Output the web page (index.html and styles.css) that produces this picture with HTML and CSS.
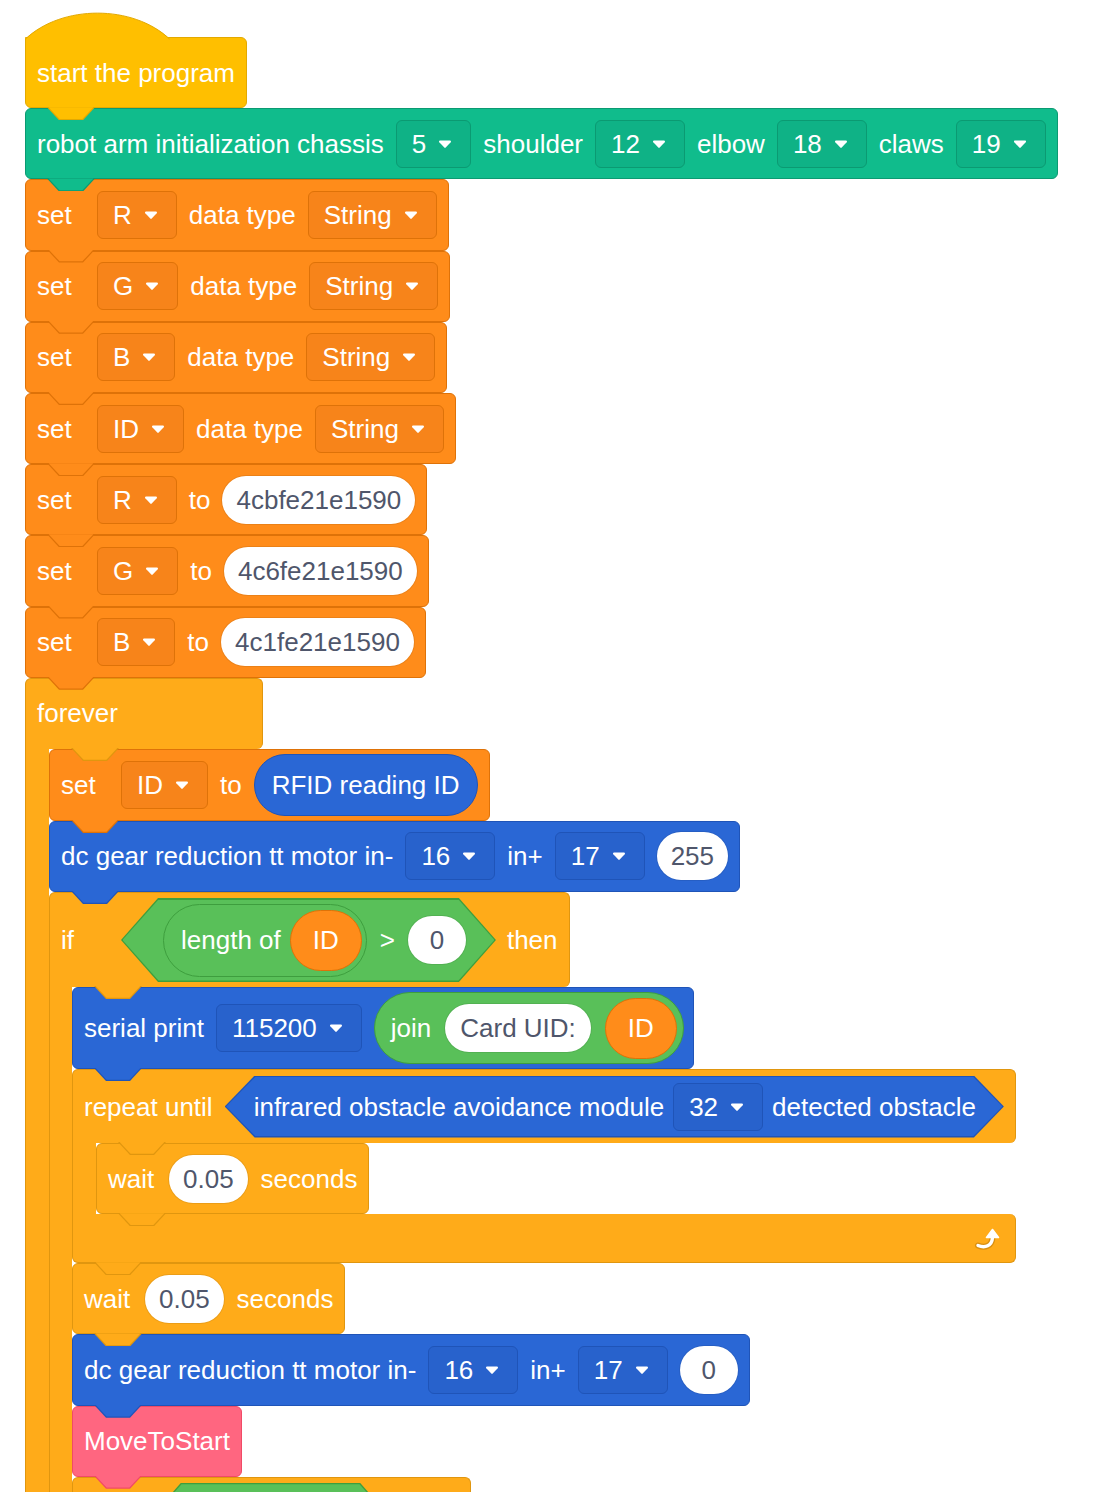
FILE: index.html
```html
<!DOCTYPE html>
<html>
<head>
<meta charset="utf-8">
<link rel="stylesheet" href="styles.css">
</head>
<body>
<div class="script">
  <div class="blk hat ev">
    <svg class="hump" viewBox="0 0 145 27"><path class="hf" d="M0,27 C37,-7.5 108,-7.5 145,27 Z"/><path class="hs" d="M0.5,27 C37,-7.5 108,-7.5 144.5,27"/></svg>
    <span class="lbl">start the program</span>
  </div>
  <div class="blk ext">
    <span class="lbl">robot arm initialization chassis</span>
    <span class="dd">5<svg class="arr" viewBox="0 0 14 10"><path d="M2 1.5h10c.9 0 1.3 1 .7 1.7L7.7 8.6c-.4.4-1 .4-1.4 0L1.3 3.2C.7 2.5 1.1 1.5 2 1.5z"/></svg></span>
    <span class="lbl">shoulder</span>
    <span class="dd">12<svg class="arr" viewBox="0 0 14 10"><path d="M2 1.5h10c.9 0 1.3 1 .7 1.7L7.7 8.6c-.4.4-1 .4-1.4 0L1.3 3.2C.7 2.5 1.1 1.5 2 1.5z"/></svg></span>
    <span class="lbl">elbow</span>
    <span class="dd">18<svg class="arr" viewBox="0 0 14 10"><path d="M2 1.5h10c.9 0 1.3 1 .7 1.7L7.7 8.6c-.4.4-1 .4-1.4 0L1.3 3.2C.7 2.5 1.1 1.5 2 1.5z"/></svg></span>
    <span class="lbl">claws</span>
    <span class="dd">19<svg class="arr" viewBox="0 0 14 10"><path d="M2 1.5h10c.9 0 1.3 1 .7 1.7L7.7 8.6c-.4.4-1 .4-1.4 0L1.3 3.2C.7 2.5 1.1 1.5 2 1.5z"/></svg></span>
  </div>
  <div class="blk var">
    <span class="lbl first">set</span>
    <span class="dd">R<svg class="arr" viewBox="0 0 14 10"><path d="M2 1.5h10c.9 0 1.3 1 .7 1.7L7.7 8.6c-.4.4-1 .4-1.4 0L1.3 3.2C.7 2.5 1.1 1.5 2 1.5z"/></svg></span>
    <span class="lbl">data type</span>
    <span class="dd">String<svg class="arr" viewBox="0 0 14 10"><path d="M2 1.5h10c.9 0 1.3 1 .7 1.7L7.7 8.6c-.4.4-1 .4-1.4 0L1.3 3.2C.7 2.5 1.1 1.5 2 1.5z"/></svg></span>
  </div>
  <div class="blk var">
    <span class="lbl first">set</span>
    <span class="dd">G<svg class="arr" viewBox="0 0 14 10"><path d="M2 1.5h10c.9 0 1.3 1 .7 1.7L7.7 8.6c-.4.4-1 .4-1.4 0L1.3 3.2C.7 2.5 1.1 1.5 2 1.5z"/></svg></span>
    <span class="lbl">data type</span>
    <span class="dd">String<svg class="arr" viewBox="0 0 14 10"><path d="M2 1.5h10c.9 0 1.3 1 .7 1.7L7.7 8.6c-.4.4-1 .4-1.4 0L1.3 3.2C.7 2.5 1.1 1.5 2 1.5z"/></svg></span>
  </div>
  <div class="blk var">
    <span class="lbl first">set</span>
    <span class="dd">B<svg class="arr" viewBox="0 0 14 10"><path d="M2 1.5h10c.9 0 1.3 1 .7 1.7L7.7 8.6c-.4.4-1 .4-1.4 0L1.3 3.2C.7 2.5 1.1 1.5 2 1.5z"/></svg></span>
    <span class="lbl">data type</span>
    <span class="dd">String<svg class="arr" viewBox="0 0 14 10"><path d="M2 1.5h10c.9 0 1.3 1 .7 1.7L7.7 8.6c-.4.4-1 .4-1.4 0L1.3 3.2C.7 2.5 1.1 1.5 2 1.5z"/></svg></span>
  </div>
  <div class="blk var">
    <span class="lbl first">set</span>
    <span class="dd">ID<svg class="arr" viewBox="0 0 14 10"><path d="M2 1.5h10c.9 0 1.3 1 .7 1.7L7.7 8.6c-.4.4-1 .4-1.4 0L1.3 3.2C.7 2.5 1.1 1.5 2 1.5z"/></svg></span>
    <span class="lbl">data type</span>
    <span class="dd">String<svg class="arr" viewBox="0 0 14 10"><path d="M2 1.5h10c.9 0 1.3 1 .7 1.7L7.7 8.6c-.4.4-1 .4-1.4 0L1.3 3.2C.7 2.5 1.1 1.5 2 1.5z"/></svg></span>
  </div>
  <div class="blk var">
    <span class="lbl first">set</span>
    <span class="dd">R<svg class="arr" viewBox="0 0 14 10"><path d="M2 1.5h10c.9 0 1.3 1 .7 1.7L7.7 8.6c-.4.4-1 .4-1.4 0L1.3 3.2C.7 2.5 1.1 1.5 2 1.5z"/></svg></span>
    <span class="lbl">to</span>
    <span class="num">4cbfe21e1590</span>
  </div>
  <div class="blk var">
    <span class="lbl first">set</span>
    <span class="dd">G<svg class="arr" viewBox="0 0 14 10"><path d="M2 1.5h10c.9 0 1.3 1 .7 1.7L7.7 8.6c-.4.4-1 .4-1.4 0L1.3 3.2C.7 2.5 1.1 1.5 2 1.5z"/></svg></span>
    <span class="lbl">to</span>
    <span class="num">4c6fe21e1590</span>
  </div>
  <div class="blk var">
    <span class="lbl first">set</span>
    <span class="dd">B<svg class="arr" viewBox="0 0 14 10"><path d="M2 1.5h10c.9 0 1.3 1 .7 1.7L7.7 8.6c-.4.4-1 .4-1.4 0L1.3 3.2C.7 2.5 1.1 1.5 2 1.5z"/></svg></span>
    <span class="lbl">to</span>
    <span class="num">4c1fe21e1590</span>
  </div>

  <div class="cblk ctl forever">
    <div class="blk chead"><span class="lbl">forever</span></div>
    <div class="cbody">
      <div class="carm"></div>
      <div class="stack">
        <div class="blk var">
          <span class="lbl first">set</span>
          <span class="dd">ID<svg class="arr" viewBox="0 0 14 10"><path d="M2 1.5h10c.9 0 1.3 1 .7 1.7L7.7 8.6c-.4.4-1 .4-1.4 0L1.3 3.2C.7 2.5 1.1 1.5 2 1.5z"/></svg></span>
          <span class="lbl">to</span>
          <span class="rep blu rfid">RFID reading ID</span>
        </div>
        <div class="blk blu">
          <span class="lbl">dc gear reduction tt motor in-</span>
          <span class="dd">16<svg class="arr" viewBox="0 0 14 10"><path d="M2 1.5h10c.9 0 1.3 1 .7 1.7L7.7 8.6c-.4.4-1 .4-1.4 0L1.3 3.2C.7 2.5 1.1 1.5 2 1.5z"/></svg></span>
          <span class="lbl">in+</span>
          <span class="dd">17<svg class="arr" viewBox="0 0 14 10"><path d="M2 1.5h10c.9 0 1.3 1 .7 1.7L7.7 8.6c-.4.4-1 .4-1.4 0L1.3 3.2C.7 2.5 1.1 1.5 2 1.5z"/></svg></span>
          <span class="num">255</span>
        </div>

        <div class="cblk ctl ifblk">
          <div class="blk chead tall">
            <span class="lbl first">if</span>
            <div class="hex op big">
              <div class="hexin">
                <span class="rep op len"><span class="lbl">length of</span><span class="vrep">ID</span></span>
                <span class="lbl">&gt;</span>
                <span class="num">0</span>
              </div>
            </div>
            <span class="lbl then">then</span>
          </div>
          <div class="cbody">
            <div class="carm"></div>
            <div class="stack">
              <div class="blk blu serial">
                <span class="lbl">serial print</span>
                <span class="dd">115200<svg class="arr" viewBox="0 0 14 10"><path d="M2 1.5h10c.9 0 1.3 1 .7 1.7L7.7 8.6c-.4.4-1 .4-1.4 0L1.3 3.2C.7 2.5 1.1 1.5 2 1.5z"/></svg></span>
                <span class="rep op join"><span class="lbl">join</span><span class="num">Card UID:</span><span class="vrep">ID</span></span>
              </div>

              <div class="cblk ctl repeat">
                <div class="blk chead rpt">
                  <span class="lbl">repeat until</span>
                  <div class="hex blu mid">
                    <div class="hexin">
                      <span class="lbl">infrared obstacle avoidance module</span>
                      <span class="dd">32<svg class="arr" viewBox="0 0 14 10"><path d="M2 1.5h10c.9 0 1.3 1 .7 1.7L7.7 8.6c-.4.4-1 .4-1.4 0L1.3 3.2C.7 2.5 1.1 1.5 2 1.5z"/></svg></span>
                      <span class="lbl">detected obstacle</span>
                    </div>
                  </div>
                </div>
                <div class="cbody">
                  <div class="carm"></div>
                  <div class="stack">
                    <div class="blk ctl wait">
                      <span class="lbl first">wait</span>
                      <span class="num">0.05</span>
                      <span class="lbl">seconds</span>
                    </div>
                  </div>
                </div>
                <div class="cfoot">
                  <svg class="loop" viewBox="0 0 28 26"><path d="M4 20.5 C11 23.5 18 21 18.5 12.5" fill="none" stroke="#D98F10" stroke-width="6" stroke-linecap="round"/><path d="M4 20.5 C11 23.5 18 21 18.5 12.5" fill="none" stroke="#fff" stroke-width="3.4" stroke-linecap="round"/><path d="M12.5 12.5 L18.5 4.5 L24.5 12.5 Z" fill="#fff" stroke="#fff" stroke-width="1.6" stroke-linejoin="round"/></svg>
                </div>
              </div>

              <div class="blk ctl wait">
                <span class="lbl first">wait</span>
                <span class="num">0.05</span>
                <span class="lbl">seconds</span>
              </div>
              <div class="blk blu">
                <span class="lbl">dc gear reduction tt motor in-</span>
                <span class="dd">16<svg class="arr" viewBox="0 0 14 10"><path d="M2 1.5h10c.9 0 1.3 1 .7 1.7L7.7 8.6c-.4.4-1 .4-1.4 0L1.3 3.2C.7 2.5 1.1 1.5 2 1.5z"/></svg></span>
                <span class="lbl">in+</span>
                <span class="dd">17<svg class="arr" viewBox="0 0 14 10"><path d="M2 1.5h10c.9 0 1.3 1 .7 1.7L7.7 8.6c-.4.4-1 .4-1.4 0L1.3 3.2C.7 2.5 1.1 1.5 2 1.5z"/></svg></span>
                <span class="num">0</span>
              </div>
              <div class="blk pink">
                <span class="lbl">MoveToStart</span>
              </div>
              <div class="cblk ctl ifblk">
                <div class="blk chead tall">
                  <span class="lbl first"></span>
                  <div class="hex op big last">
                    <div class="hexin">
                      <span class="vrep small"></span>
                      <span class="eq"></span>
                      <span class="vrep small"></span>
                    </div>
                  </div>
                  <span class="thenbox"></span>
                </div>
                <div class="cbody">
                  <div class="carm"></div>
                  <div class="stack"></div>
                </div>
              </div>
            </div>
          </div>
        </div>
      </div>
    </div>
  </div>
</div>
</body>
</html>
```

FILE: styles.css
```css
* { box-sizing: border-box; }
html, body { margin: 0; background: #ffffff; }
body {
  font-family: "Liberation Sans", Arial, sans-serif;
  font-size: 26px;
  color: #ffffff;
}

.script {
  padding: 37px 0 0 25px;
  display: flex;
  flex-direction: column;
  align-items: flex-start;
}
.stack {
  display: flex;
  flex-direction: column;
  align-items: flex-start;
}

/* categories */
.ev   { --c: #FFBF00; --s: #E3A900; --d: #F5B500; }
.ext  { --c: #10BC8C; --s: #0B9A72; --d: #0FB286; }
.var  { --c: #FF8C1A; --s: #DE7208; --d: #F7841A; }
.ctl  { --c: #FFAB19; --s: #E0960F; --d: #F5A216; }
.blu  { --c: #2A67D5; --s: #1F54B8; --d: #2862CC; }
.op   { --c: #59C059; --s: #3E9E3E; --d: #52B552; }
.pink { --c: #FF6680; --s: #F04A66; --d: #F55F79; }

.lbl { line-height: 1; white-space: nowrap; }
.lbl.first { min-width: 48px; }

/* stack block */
.blk {
  position: relative;
  display: flex;
  align-items: center;
  gap: 12px;
  padding: 4px 11px;
  min-height: 71.2px;
  background: var(--c);
  border: 1px solid var(--s);
  border-radius: 6px;
  white-space: nowrap;
}
.blk::before,
.blk::after,
.cfoot::before,
.cfoot::after {
  content: "";
  position: absolute;
  left: 21px;
  bottom: -13px;
  width: 48px;
  height: 13px;
}
.blk::before, .cfoot::before {
  z-index: 2;
  background: var(--s);
  clip-path: polygon(0 0, 100% 0, 36px 100%, 12px 100%);
}
.blk::after, .cfoot::after {
  z-index: 3;
  background: var(--c);
  clip-path: polygon(1.6px 0, 46.4px 0, 35.4px 11.8px, 12.6px 11.8px);
}

/* hat */
.hat { border-top-left-radius: 0; }
.hump {
  position: absolute;
  left: -1px;
  top: -26px;
  width: 145px;
  height: 27px;
  overflow: visible;
}
.hump .hf { fill: #FFBF00; }
.hump .hs { fill: none; stroke: #E3A900; stroke-width: 1; }

/* dropdown */
.dd {
  display: flex;
  align-items: center;
  gap: 12px;
  height: 48px;
  padding: 0 18px 0 15px;
  background: var(--d);
  border: 1px solid var(--s);
  border-radius: 6px;
  line-height: 1;
}
.arr { width: 14px; height: 10px; fill: #ffffff; }

/* white value oval */
.num {
  display: flex;
  align-items: center;
  justify-content: center;
  height: 48px;
  min-width: 58px;
  padding: 0 14px;
  background: #ffffff;
  color: #4f566b;
  border-radius: 24px;
  line-height: 1;
  box-shadow: 0 0 0 1px rgba(0, 0, 0, 0.08);
}

/* reporters */
.rep {
  display: flex;
  align-items: center;
  background: var(--c);
  border: 1px solid var(--s);
  border-radius: 999px;
  line-height: 1;
}
.rfid { height: 62px; padding: 0 17px; }
.len { height: 73px; padding: 0 4px 0 17px; gap: 9px; }
.join { height: 72px; padding: 0 6px 0 16px; gap: 14px; }
.join .num { padding: 0 15px; }
.vrep {
  display: flex;
  align-items: center;
  justify-content: center;
  height: 61px;
  min-width: 72px;
  padding: 0 20px;
  background: #FF8C1A;
  border: 1px solid #DE7208;
  border-radius: 999px;
  line-height: 1;
}
.vrep.small { min-width: 42px; padding: 0 8px; }

/* hexagon (boolean) */
.hex {
  background: var(--s);
  padding: 1.5px;
  clip-path: polygon(0 50%, var(--sl) 0, calc(100% - var(--sl)) 0, 100% 50%, calc(100% - var(--sl)) 100%, var(--sl) 100%);
}
.hexin {
  display: flex;
  align-items: center;
  gap: 13px;
  background: var(--c);
  clip-path: polygon(0 50%, var(--si) 0, calc(100% - var(--si)) 0, 100% 50%, calc(100% - var(--si)) 100%, var(--si) 100%);
}
.hex.big { --sl: 37px; --si: 36px; }
.hex.big .hexin { height: 81px; padding: 0 28.5px 0 40.5px; }
.hex.big.last .hexin { padding: 0 48.5px 0 47.5px; }
.hex.mid { --sl: 30px; --si: 29px; }
.hex.mid .hexin { height: 59px; padding: 0 26.5px 0 27.5px; gap: 9px; }
.eq { width: 44px; height: 20px; }
.then { margin-left: -1px; }
.thenbox { width: 50px; height: 20px; }

/* C blocks */
.cblk {
  position: relative;
  display: flex;
  flex-direction: column;
  align-items: flex-start;
}
.forever { --arm: 24px; }
.ifblk { --arm: 23px; }
.repeat { --arm: 24px; }

.chead {
  border-bottom: none;
  padding-bottom: 5px;
  border-radius: 6px 6px 6px 0;
}
.chead::before, .chead::after { left: calc(var(--arm) + 21px); bottom: -12px; }
.forever > .chead { width: 238px; }
.chead.tall { padding-top: 5px; padding-bottom: 5px; }
.chead.rpt { padding-top: 5.5px; padding-bottom: 5.5px; }

.cbody { display: flex; align-items: stretch; }
.carm {
  width: var(--arm);
  flex: none;
  background: var(--c);
  border-left: 1px solid var(--s);
}

.cfoot {
  position: relative;
  width: 100%;
  height: 49px;
  display: flex;
  align-items: center;
  justify-content: flex-end;
  padding-right: 13px;
  background: var(--c);
  border: 1px solid var(--s);
  border-top: none;
  border-radius: 0 6px 6px 6px;
}
.loop { width: 28px; height: 26px; }

.serial { padding-top: 4px; padding-bottom: 4px; padding-right: 9px; }
.wait { gap: 13px; }
```
